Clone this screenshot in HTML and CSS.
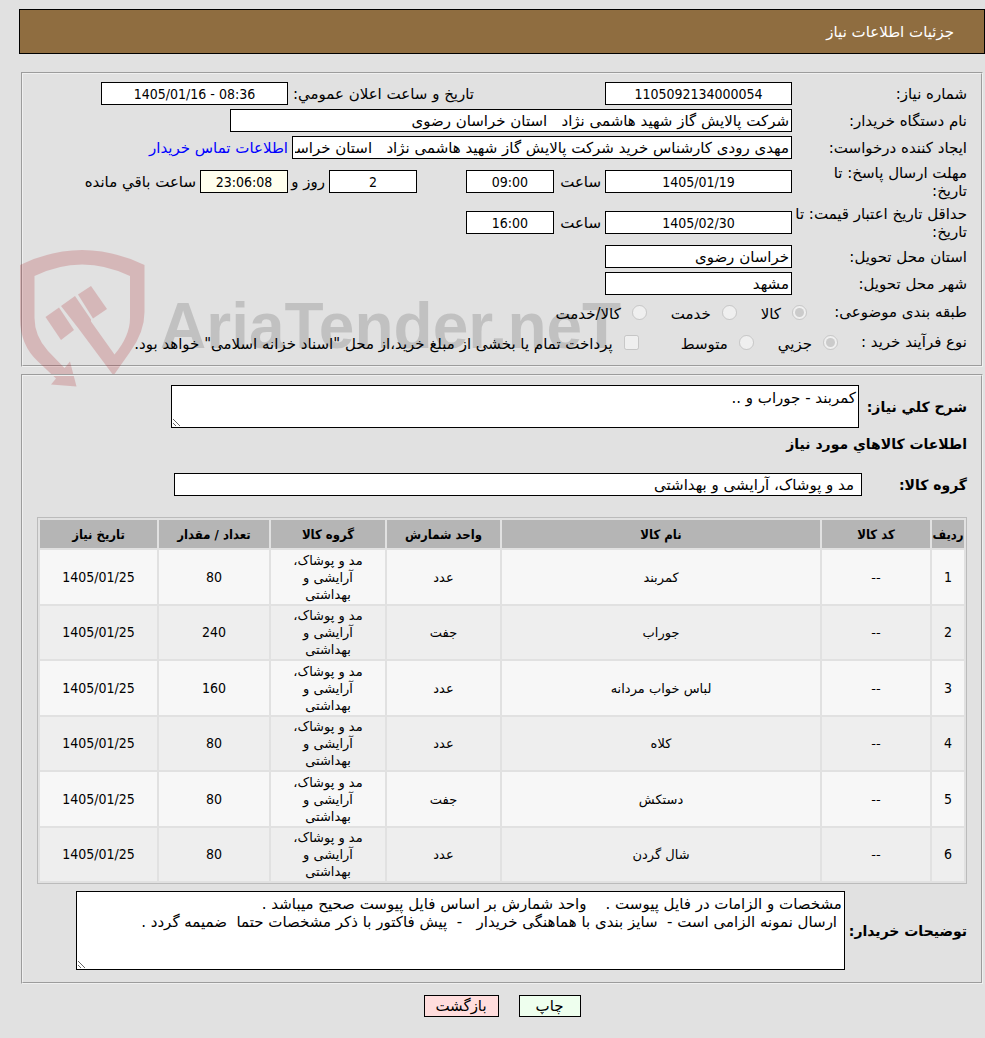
FILE: index.html
```html
<!DOCTYPE html>
<html lang="fa" dir="rtl">
<head>
  <meta charset="UTF-8" />
  <title>جزئیات اطلاعات نیاز</title>
  <meta name="viewport" content="width=device-width, initial-scale=1.0" />
  <link rel="stylesheet" href="styles.css">
</head>
<body>

<div class="page">
  <header class="title-bar">جزئیات اطلاعات نیاز</header>

  <fieldset class="box need-info">
    <div class="row">
      <label class="caption" for="needNo">شماره نیاز:</label>
      <input class="field num medium" id="needNo" type="text" value="1105092134000054" readonly />
      <label class="caption-announce" for="announceDate">تاريخ و ساعت اعلان عمومي:</label>
      <input class="field num medium" id="announceDate" type="text" value="1405/01/16 - 08:36" dir="ltr" readonly />
    </div>
    <div class="row">
      <label class="caption" for="buyerOrg">نام دستگاه خریدار:</label>
      <input class="field wide" id="buyerOrg" type="text" value="شرکت پالایش گاز شهید هاشمی نژاد   استان خراسان رضوی" readonly />
    </div>
    <div class="row">
      <label class="caption" for="creator">ایجاد کننده درخواست:</label>
      <input class="field long" id="creator" type="text" value="مهدی رودی کارشناس خرید شرکت پالایش گاز شهید هاشمی نژاد   استان خراسان رضوی" readonly />
      <a class="contact" href="#">اطلاعات تماس خریدار</a>
    </div>
    <div class="row tall">
      <label class="caption" for="replyDate">مهلت ارسال پاسخ: تا<br>تاریخ:</label>
      <input class="field num medium" id="replyDate" type="text" value="1405/01/19" readonly />
      <label class="unit" for="replyHour">ساعت</label>
      <input class="field num short" id="replyHour" type="text" value="09:00" readonly />
      <input class="field num short days" id="daysLeft" type="text" value="2" readonly />
      <label class="unit-day" for="daysLeft">روز و</label>
      <input class="field num short timer" id="timeLeft" type="text" value="23:06:08" readonly />
      <label for="timeLeft">ساعت باقي مانده</label>
    </div>
    <div class="row tall">
      <label class="caption" for="priceDate">حداقل تاریخ اعتبار قیمت: تا<br>تاریخ:</label>
      <input class="field num medium" id="priceDate" type="text" value="1405/02/30" readonly />
      <label class="unit" for="priceHour">ساعت</label>
      <input class="field num short" id="priceHour" type="text" value="16:00" readonly />
    </div>
    <div class="row">
      <label class="caption" for="province">استان محل تحویل:</label>
      <input class="field medium" id="province" type="text" value="خراسان رضوی" readonly />
    </div>
    <div class="row">
      <label class="caption" for="city">شهر محل تحویل:</label>
      <input class="field medium" id="city" type="text" value="مشهد" readonly />
    </div>
    <div class="row options">
      <span class="options-caption">طبقه بندی موضوعی:</span>
      <label class="option"><input type="radio" name="category" checked disabled /><span>كالا</span></label>
      <label class="option"><input type="radio" name="category" disabled /><span>خدمت</span></label>
      <label class="option"><input type="radio" name="category" disabled /><span>کالا/خدمت</span></label>
    </div>
    <div class="row options">
      <span class="options-caption process">نوع فرآیند خرید :</span>
      <label class="option"><input type="radio" name="process" checked disabled /><span>جزيي</span></label>
      <label class="option"><input type="radio" name="process" disabled /><span>متوسط</span></label>
      <label class="option treasury"><input type="checkbox" disabled /><span>پرداخت تمام یا بخشی از مبلغ خرید،از محل "اسناد خزانه اسلامی" خواهد بود.</span></label>
    </div>

    <div class="watermark" aria-hidden="true">
      <svg class="watermark-logo" viewBox="20 248 126 140" width="126" height="140">
        <path fill-rule="evenodd" d="M20 265Q82 235 144.500 265V312Q144.500 332 130 352L113.500 375.500L78.500 328.500L61 306L75 296L91 319.500V321.500L114.500 354.500Q130 336 130 318V276Q82 253 34.500 276V318Q34.500 336 48 351L64.500 368L70 361.500L76.500 386.500L51 384.500L56 378.500L38 361.500Q20 345 20 318Z"/>
        <path d="M78 294.500L91 286L107 309L93 318.500Z"/>
        <path d="M45.500 317L59 307.500L74 330L61 340Z"/>
      </svg>
      <span class="watermark-text" dir="ltr">AriaTender.neT</span>
    </div>
  </fieldset>

  <fieldset class="box goods-info">
    <div class="row">
      <label class="strong summary-caption" for="summary">شرح كلي نياز:</label>
      <textarea class="field summary" id="summary" readonly>کمربند - جوراب و ..</textarea>
    </div>
    <h2>اطلاعات كالاهاي مورد نياز</h2>
    <div class="row group-row">
      <label class="strong group-caption" for="group">گروه کالا:</label>
      <input class="field group" id="group" type="text" value="مد و پوشاک، آرایشی و بهداشتی" readonly />
    </div>

    <table class="goods">
      <colgroup>
        <col class="col-row"><col class="col-code"><col class="col-name"><col class="col-unit">
        <col class="col-group"><col class="col-count"><col class="col-date">
      </colgroup>
      <thead>
        <tr><th>ردیف</th><th>کد کالا</th><th>نام کالا</th><th>واحد شمارش</th><th>گروه کالا</th><th>تعداد / مقدار</th><th>تاریخ نیاز</th></tr>
      </thead>
      <tbody>
        <tr><td class="digits">1</td><td>--</td><td>کمربند</td><td>عدد</td><td class="group-cell">مد و پوشاک، آرایشی و بهداشتی</td><td class="digits">80</td><td class="digits">1405/01/25</td></tr>
        <tr><td class="digits">2</td><td>--</td><td>جوراب</td><td>جفت</td><td class="group-cell">مد و پوشاک، آرایشی و بهداشتی</td><td class="digits">240</td><td class="digits">1405/01/25</td></tr>
        <tr><td class="digits">3</td><td>--</td><td>لباس خواب مردانه</td><td>عدد</td><td class="group-cell">مد و پوشاک، آرایشی و بهداشتی</td><td class="digits">160</td><td class="digits">1405/01/25</td></tr>
        <tr><td class="digits">4</td><td>--</td><td>کلاه</td><td>عدد</td><td class="group-cell">مد و پوشاک، آرایشی و بهداشتی</td><td class="digits">80</td><td class="digits">1405/01/25</td></tr>
        <tr><td class="digits">5</td><td>--</td><td>دستکش</td><td>جفت</td><td class="group-cell">مد و پوشاک، آرایشی و بهداشتی</td><td class="digits">80</td><td class="digits">1405/01/25</td></tr>
        <tr><td class="digits">6</td><td>--</td><td>شال گردن</td><td>عدد</td><td class="group-cell">مد و پوشاک، آرایشی و بهداشتی</td><td class="digits">80</td><td class="digits">1405/01/25</td></tr>
      </tbody>
    </table>

    <div class="row">
      <label class="strong" for="notes">توضیحات خریدار:</label>
      <textarea class="field notes" id="notes" readonly>مشخصات و الزامات در فایل پیوست .    واحد شمارش بر اساس فایل پیوست صحیح میباشد .
 ارسال نمونه الزامی است -  سایز بندی با هماهنگی خریدار   -  پیش فاکتور با ذکر مشخصات حتما  ضمیمه گردد .</textarea>
    </div>
  </fieldset>

  <div class="actions">
    <button class="print" type="button">چاپ</button>
    <button class="back" type="button">بازگشت</button>
  </div>
</div>

</body>
</html>
```
FILE: styles.css
```css
:root {
  --page-bg: #e1e1e1;
  --bar-bg: #8f6d40;
  --head-bg: #b5b5b5;
  --odd-bg: #f7f7f7;
  --even-bg: #eeeeee;
  --narrow: "DejaVu Sans Condensed", "DejaVu Sans", sans-serif;
}

* {
  box-sizing: border-box;
}

body {
  margin: 0;
  background: var(--page-bg);
  color: #000;
  font-family: "DejaVu Sans", sans-serif;
  font-size: 15px;
  line-height: 18px;
}

.page {
  padding: 9px 0 22px;
  margin-left: 19px;
}

.title-bar {
  height: 45px;
  margin-bottom: 18px;
  padding: 13px 30px;
  border: 1px solid #000;
  background: var(--bar-bg);
  color: #fff;
}

.box {
  position: relative;
  margin: 0 2px 7px;
  padding: 8px 14px 6px;
  border: 2px groove #f0f0f0;
}

.row {
  display: flex;
  align-items: center;
  gap: 4px;
  min-height: 23px;
}

.need-info .row {
  margin-bottom: 4px;
}

.row.tall {
  min-height: 37px;
}

.caption {
  flex: none;
  width: 171px;
  white-space: nowrap;
}

.field {
  height: 23px;
  padding: 1px 2px;
  border: 1px solid #000;
  border-radius: 0;
  background: #fff;
  color: #000;
  font: inherit;
}

textarea.field {
  padding-top: 3px;
}

.num {
  font-family: var(--narrow);
  font-size: 14px;
  text-align: center;
}

.medium {
  width: 187px;
}

.wide {
  width: 562px;
}

.long {
  width: 500px;
}

.short {
  width: 88px;
}

.days {
  margin-right: 45px;
}

.timer {
  background: #ffffee;
}

.caption-announce {
  width: 182px;
  margin-right: 127px;
  white-space: nowrap;
}

.unit {
  width: 43px;
}

.unit-day {
  width: 33px;
  white-space: nowrap;
}

.contact {
  color: #0000ff;
  text-decoration: none;
}

.row.options {
  gap: 24px;
  min-height: 26px;
}

.options-caption {
  width: 136px;
  white-space: nowrap;
}

.options-caption.process {
  width: 105px;
}

.option {
  display: flex;
  align-items: center;
  gap: 11px;
}

.option input {
  width: 15px;
  height: 15px;
  margin: 0;
}

.option span {
  padding-top: 4px;
}

.treasury {
  margin-right: 18px;
  white-space: nowrap;
}

.watermark {
  position: absolute;
  left: -3px;
  bottom: -23px;
  display: flex;
  flex-direction: row-reverse;
  align-items: center;
  gap: 14px;
  pointer-events: none;
}

.watermark-logo {
  fill: #aa141c;
  opacity: 0.2;
}

.watermark-text {
  margin-top: 16px;
  color: rgba(0, 0, 0, 0.14);
  font-family: "Liberation Sans", sans-serif;
  font-size: 64px;
  font-weight: bold;
  line-height: 80px;
}

.strong,
h2 {
  font-size: 14px;
  font-weight: bold;
}

.strong {
  white-space: nowrap;
}

.summary-caption {
  width: 104px;
}

.summary {
  width: 688px;
  height: 43px;
}

h2 {
  margin: 7px 0 20px;
}

.group-caption {
  width: 101px;
}

.group {
  width: 688px;
  padding-right: 7px;
}

.group-row {
  margin-bottom: 21px;
}

.goods {
  width: 100%;
  margin-bottom: 7px;
  border: 1px solid #bbb;
  border-collapse: separate;
  border-spacing: 2px;
  table-layout: fixed;
  font-size: 13px;
  line-height: 17px;
  text-align: center;
}

.goods-info {
  padding: 9px 14px 12px;
}

.goods th {
  height: 28px;
  padding: 0;
  background: var(--head-bg);
  font-family: var(--narrow);
}

.goods td {
  height: 54px;
  padding: 1px;
  background: var(--odd-bg);
}

.goods tr:nth-child(even) td {
  height: 53px;
  background: var(--even-bg);
}

.goods .digits {
  font-family: var(--narrow);
  font-size: 14px;
}

.goods .group-cell {
  padding: 1px 18px;
}

.col-row { width: 32px; }
.col-code { width: 108px; }
.col-unit { width: 113px; }
.col-group { width: 114px; }
.col-count { width: 110px; }
.col-date { width: 117px; }

.notes {
  width: 769px;
  height: 79px;
}

.actions {
  display: flex;
  justify-content: center;
  gap: 20px;
  padding-top: 4px;
}

.actions button {
  height: 22px;
  padding: 0;
  border: 1px solid #000;
  color: #000;
  font: inherit;
}

.print {
  width: 62px;
  background: #eeffee;
}

.back {
  width: 75px;
  background: #ffdddd;
}
```
